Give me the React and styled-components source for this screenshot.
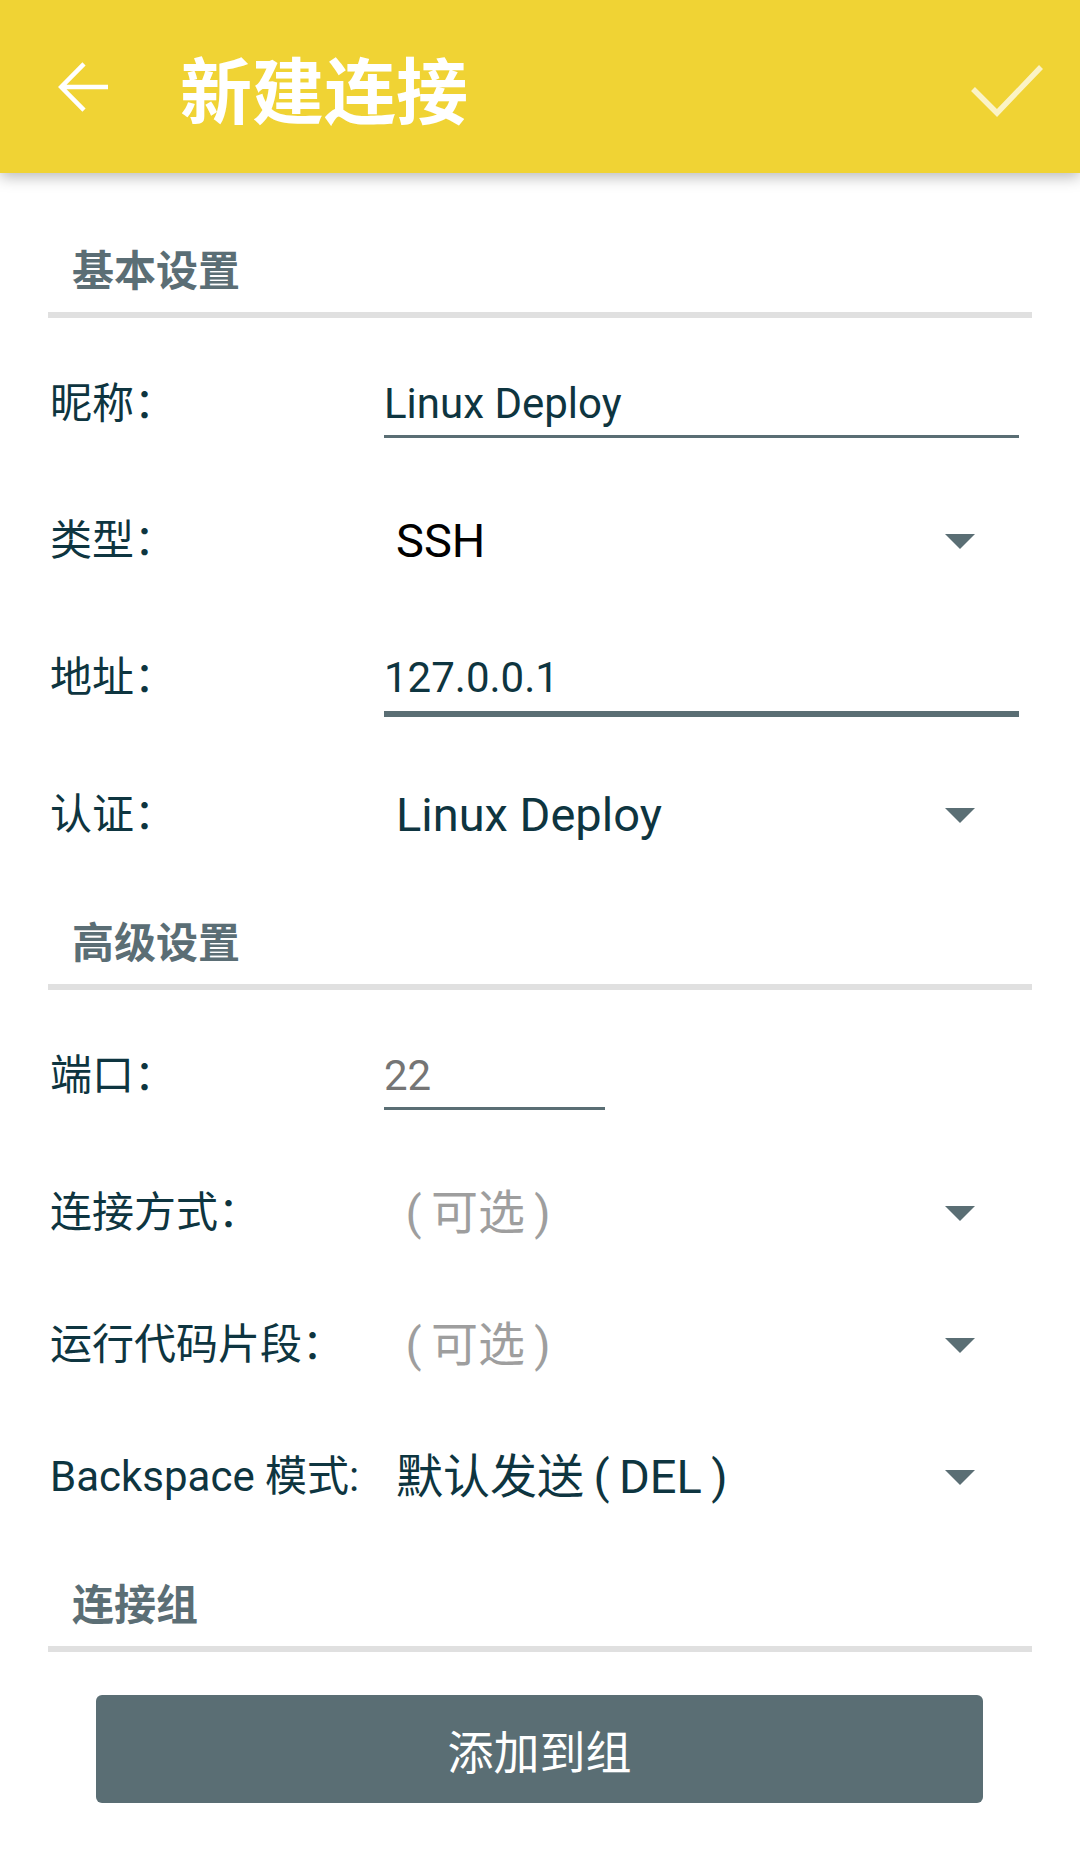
import React from 'react';
import styled, { createGlobalStyle } from 'styled-components';

const GlobalStyle = createGlobalStyle`
  html, body {
    margin: 0;
    padding: 0;
    background: #fff;
  }
  body {
    font-family: Roboto, "Noto Sans CJK SC", sans-serif;
    width: 1080px;
    min-height: 1866px;
  }
`;

const ACCENT = '#5a6e74';
const INK = '#0e3540';

const Screen = styled.div`
  width: 1080px;
  min-height: 1866px;
  background: #fff;
`;

const AppBar = styled.header`
  position: relative;
  z-index: 1;
  height: 173px;
  background: #f0d334;
  display: flex;
  align-items: center;
  padding: 0 32px 0 48px;
  box-sizing: border-box;
  box-shadow: 0 4px 14px rgba(0, 0, 0, 0.28);
`;

const Title = styled.h1`
  margin: 0 0 0 60px;
  font-family: "Noto Sans CJK SC", sans-serif;
  font-size: 72px;
  font-weight: 700;
  color: #fff;
  line-height: 1;
`;

const Spacer = styled.div`
  flex: 1;
`;

const Form = styled.main`
  padding: 36px 48px 0;
`;

const SectionTitle = styled.h2`
  margin: 29px 0 0;
  padding-left: 24px;
  font-family: "Noto Sans CJK SC", sans-serif;
  font-size: 42px;
  font-weight: 700;
  line-height: 60px;
  color: #5b6e75;
`;

const Divider = styled.div`
  height: 6px;
  background: #e0e0e0;
  margin: 14px 0 15px;
`;

const Row = styled.div`
  display: flex;
  align-items: center;
  height: ${(p) => (p.$edit ? 142 : 132)}px;
  padding-left: 2px;
`;

const Label = styled.div`
  width: 334px;
  flex-shrink: 0;
  font-size: 42px;
  line-height: 50px;
  color: ${INK};
  white-space: nowrap;
`;

const Field = styled.div`
  width: ${(p) => p.$width || 635}px;
  font-size: 42px;
  line-height: 50px;
  color: ${(p) => (p.$hint ? '#757575' : INK)};
  padding: ${(p) => (p.$focused ? '14px 0 8px' : '9px 0 6px')};
  border-bottom: ${(p) => (p.$focused ? 6 : 3)}px solid ${ACCENT};
`;

const Spinner = styled.div`
  width: 635px;
  display: flex;
  align-items: center;
  justify-content: space-between;
  padding-left: 12px;
  box-sizing: border-box;
`;

const SpinnerText = styled.span`
  font-size: 47px;
  line-height: 60px;
  color: ${(p) => p.$color || INK};
  white-space: nowrap;
`;

const Paren = styled.span`
  display: inline-block;
  width: 35px;
  text-align: center;
`;

const Caret = styled.span`
  width: 0;
  height: 0;
  margin-right: 44px;
  border-left: 15px solid transparent;
  border-right: 15px solid transparent;
  border-top: 15px solid ${ACCENT};
`;

const AddButton = styled.button`
  display: block;
  width: 887px;
  height: 108px;
  margin: 43px 0 0 48px;
  border: none;
  border-radius: 6px;
  background: ${ACCENT};
  color: #fff;
  font-family: "Noto Sans CJK SC", sans-serif;
  font-size: 46px;
  cursor: pointer;
`;

const BackIcon = () => (
  <svg width="72" height="72" viewBox="0 0 24 24" fill="none">
    <path d="M20 12H4.6M12 4.3L4.4 12 12 19.7" stroke="#fff" strokeWidth="1.5" />
  </svg>
);

const CheckIcon = () => (
  <svg width="80" height="80" viewBox="0 0 80 80" fill="none">
    <polyline
      points="5,42 29,66 73,20"
      stroke="#fff"
      strokeOpacity="0.72"
      strokeWidth="5.5"
    />
  </svg>
);

function Section({ title, children }) {
  return (
    <>
      <SectionTitle>{title}</SectionTitle>
      <Divider />
      {children}
    </>
  );
}

function EditRow({ label, value, ...rest }) {
  return (
    <Row $edit>
      <Label>{label}</Label>
      <Field {...rest}>{value}</Field>
    </Row>
  );
}

function SpinnerRow({ label, color, children }) {
  return (
    <Row>
      <Label>{label}</Label>
      <Spinner>
        <SpinnerText $color={color}>{children}</SpinnerText>
        <Caret />
      </Spinner>
    </Row>
  );
}

export default function App() {
  return (
    <Screen>
      <GlobalStyle />
      <AppBar>
        <BackIcon />
        <Title>新建连接</Title>
        <Spacer />
        <CheckIcon />
      </AppBar>
      <Form>
        <Section title="基本设置">
          <EditRow label="昵称：" value="Linux Deploy" />
          <SpinnerRow label="类型：" color="#000">SSH</SpinnerRow>
          <EditRow label="地址：" value="127.0.0.1" $focused />
          <SpinnerRow label="认证：">Linux Deploy</SpinnerRow>
        </Section>
        <Section title="高级设置">
          <EditRow label="端口：" value="22" $width={221} $hint />
          <SpinnerRow label="连接方式：" color="#9e9e9e">
            <Paren>(</Paren>可选<Paren>)</Paren>
          </SpinnerRow>
          <SpinnerRow label="运行代码片段：" color="#9e9e9e">
            <Paren>(</Paren>可选<Paren>)</Paren>
          </SpinnerRow>
          <SpinnerRow label="Backspace 模式:">
            默认发送<Paren>(</Paren>DEL<Paren>)</Paren>
          </SpinnerRow>
        </Section>
        <Section title="连接组" />
        <AddButton>添加到组</AddButton>
      </Form>
    </Screen>
  );
}
